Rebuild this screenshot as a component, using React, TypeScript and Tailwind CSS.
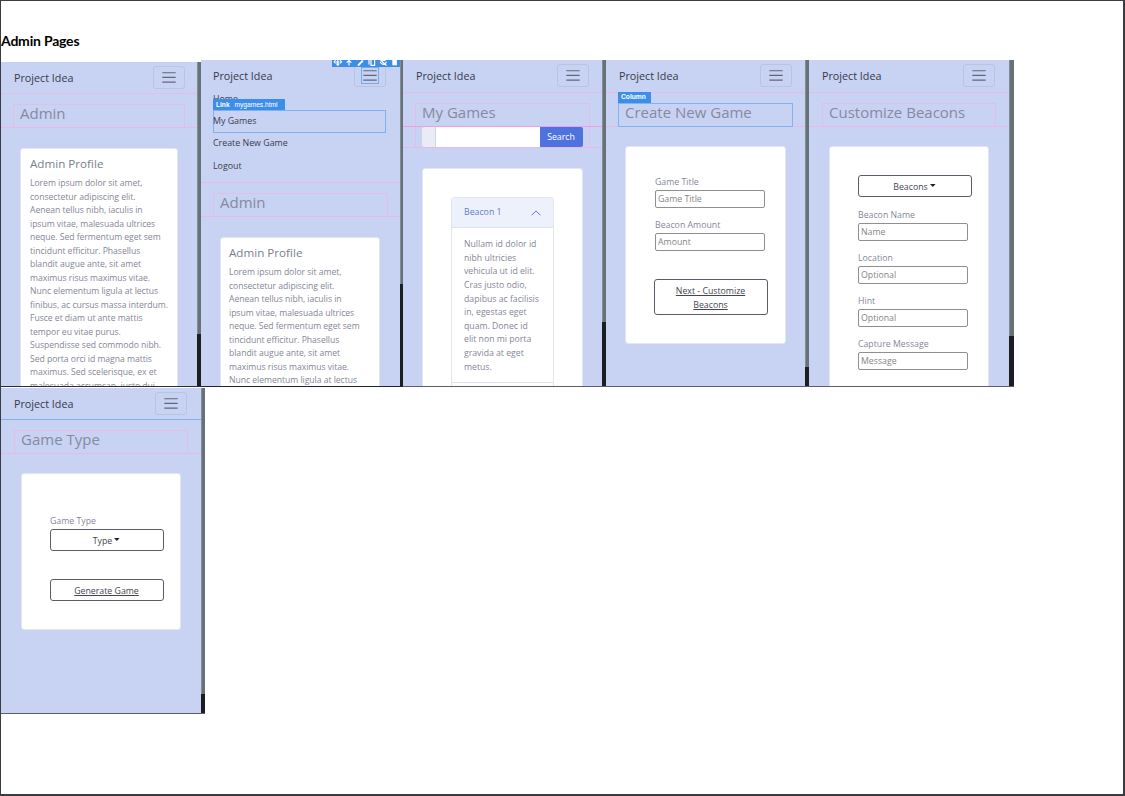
import type { ReactNode } from "react";

const LOREM = [
  "Lorem ipsum dolor sit amet,",
  "consectetur adipiscing elit.",
  "Aenean tellus nibh, iaculis in",
  "ipsum vitae, malesuada ultrices",
  "neque. Sed fermentum eget sem",
  "tincidunt efficitur. Phasellus",
  "blandit augue ante, sit amet",
  "maximus risus maximus vitae.",
  "Nunc elementum ligula at lectus",
  "finibus, ac cursus massa interdum.",
  "Fusce et diam ut ante mattis",
  "tempor eu vitae purus.",
  "Suspendisse sed commodo nibh.",
  "Sed porta orci id magna mattis",
  "maximus. Sed scelerisque, ex et",
  "malesuada accumsan, justo dui",
];

const BEACON_TEXT = [
  "Nullam id dolor id",
  "nibh ultricies",
  "vehicula ut id elit.",
  "Cras justo odio,",
  "dapibus ac facilisis",
  "in, egestas eget",
  "quam. Donec id",
  "elit non mi porta",
  "gravida at eget",
  "metus.",
];

function Phone({ width, thumb, bar, bottom = "border-[#5b5f6c]", children }: {
  width: string;
  thumb: string;
  bar: string;
  bottom?: string;
  children: ReactNode;
}) {
  return (
    <div className={`flex h-full border-b ${bottom}`}>
      <div className={`h-full shrink-0 overflow-hidden bg-[#c8d2f3] ${width}`}>{children}</div>
      <div className={`h-full shrink-0 bg-[#1c1f22] ${bar}`}>
        <div className={`border-l border-[#838c99] bg-[#677274] ${thumb}`} />
      </div>
    </div>
  );
}

function NavBar({ pad = "pl-[13px] pr-[13px]", active = false }: { pad?: string; active?: boolean }) {
  return (
    <div className={`flex h-[31px] items-start justify-between ${pad}`}>
      <span className="mt-[7px] text-[10.75px] leading-[18px] whitespace-nowrap text-[#363a48]">Project Idea</span>
      <span className="mt-1 flex h-[23px] w-8 items-center justify-center rounded-[3px] border border-[#bac3e2]">
        <span className={`flex h-[17px] w-[18px] items-center justify-center ${active ? "border border-[#74aaf0]" : ""}`}>
          <svg width="14" height="13" viewBox="0 0 14 13" fill="none" stroke="#626779" className="shrink-0">
            <path d="M.3 1.7h13.4M.3 6.4h13.4M.3 11.1h13.4" strokeWidth="1.1" />
          </svg>
        </span>
      </span>
    </div>
  );
}

function Title({ children, pad = "px-[13px]", blue = false }: { children: ReactNode; pad?: string; blue?: boolean }) {
  return (
    <div className={`flex h-[34px] flex-col border-b border-[#eab8e6] pt-[10px] ${pad}`}>
      <div
        className={`shrink-0 border pl-[6px] ${
          blue ? "h-6 border-[#82b2f0]" : "h-[23px] border-b-0 border-[#e2bdea]"
        }`}
      >
        <h2 className="-mt-[2px] text-[15px] leading-5 whitespace-nowrap text-[#868a9f]">{children}</h2>
      </div>
    </div>
  );
}

function Profile({ place, lines }: { place: string; lines: string[] }) {
  return (
    <div className={`h-[400px] rounded-t-[3px] border border-[#e1e6f5] bg-white pt-[5px] ${place}`}>
      <h3 className="text-[11.65px] leading-5 text-[#7b7e8e]">Admin Profile</h3>
      <div className="mt-[3px] text-[8.65px] leading-[13.53px] tracking-[-0.04px] whitespace-nowrap text-[#858796]">
        {lines.map((line) => (
          <p key={line}>{line}</p>
        ))}
      </div>
    </div>
  );
}

function Field({ label, value }: { label: string; value: string }) {
  return (
    <div className="mb-[11px] h-8 text-[8.75px] leading-[13px] text-[#858796]">
      <div className="whitespace-nowrap">{label}</div>
      <div className="mt-px flex h-[18px] w-[110px] items-center rounded-[2px] border border-[#8f8f8f] pl-[2px] text-[#858585]">
        {value}
      </div>
    </div>
  );
}

function Outline({ children, size = "h-[22px]", link = false }: { children: ReactNode; size?: string; link?: boolean }) {
  return (
    <div
      className={`flex w-[114px] items-center justify-center rounded-[3px] border border-[#5a5c69] pt-px pr-px text-center text-[8.75px] leading-[14px] text-[#43454f] ${size} ${
        link ? "underline" : ""
      }`}
    >
      <span>{children}</span>
      {!link && (
        <svg width="6" height="3" viewBox="0 0 6 3" fill="#222" className="mb-[2px] ml-[2px]">
          <path d="M0 0h5.6L2.8 3z" />
        </svg>
      )}
    </div>
  );
}

function Toolbar() {
  return (
    <div className="absolute top-0 right-[3px] h-[7px] w-[68px] overflow-hidden bg-[#3d8ee8]">
      <svg width="68" height="7" viewBox="0 0 68 7" fill="none" stroke="#fff" strokeWidth="1.2">
        <path d="M4 2h3.5M5.8 0v5M4.3 3.7l1.5 1.6 1.5-1.6M3.6.3 2.2 1.8l1.4 1.5M8.1.3l1.4 1.5-1.4 1.5" />
        <path d="M17 5.6V.7M14.6 2.6 17 .5l2.4 2.1" />
        <path d="m26 5.6 4.8-5" strokeWidth="2" />
        <path d="M37 0v4.5M39 0v5.4h3.6V0" />
        <path d="M48 1.8c1.6 3.4 5 3.4 6.6 0M48.5 0l6 5.5M49.5.5h4" />
        <path d="M60.3 0h4.6v5.3h-4.6z" fill="#fff" stroke="none" />
      </svg>
    </div>
  );
}

export default function App() {
  return (
    <div className="flex h-[796px] w-[1125px] flex-col overflow-hidden border-t border-r-2 border-b-2 border-l border-t-[#3a3c3f] border-r-[#3a3c40] border-b-[#3a3c40] border-l-[#3a3c3f] bg-white font-['Open_Sans',sans-serif]">
      <h1 className="flex h-[59px] shrink-0 items-end pb-[9px] font-['Lato',sans-serif] text-[14px] leading-5 font-bold tracking-[-0.2px] text-black">
        Admin Pages
      </h1>

      <div className="flex h-[327px] shrink-0">
        <div className="h-full pt-[2px]">
          <Phone width="w-[196px]" bar="w-1" thumb="h-[272px]" bottom="border-[#2a2c33]">
            <NavBar pad="pl-[13px] pr-3" />
            <div className="border-t border-[#e2bdea]" />
            <Title pad="px-3">Admin</Title>
            <Profile place="mt-5 ml-[19px] w-[158px] pl-[9px]" lines={LOREM} />
          </Phone>
        </div>

        <div className="relative h-full">
          <Phone width="w-[199px]" bar="w-[3px]" thumb="h-[224px]" bottom="border-[#1f2430]">
            <NavBar pad="pl-3 pr-[14px]" active />
            <div className="-mt-1 h-24 border-b border-[#eab8e6] pr-[14px] pl-3 text-[8.85px] text-[#3a3e4c]">
              <div className="flex h-[23px] items-center pt-[2px]">Home</div>
              <div className="relative flex h-[23px] items-center border border-[#7fb0f1] pt-px">
                <span className="-ml-px">My Games</span>
                <div className="absolute -top-3 -left-px flex h-[11px] w-[72px] items-center gap-[5px] bg-[#3d8ee8] pl-[3px] font-['Liberation_Sans',sans-serif] text-[6.6px] whitespace-nowrap text-white">
                  <b>Link</b>
                  <span>mygames.html</span>
                </div>
              </div>
              <div className="flex h-[22px] items-center">Create New Game</div>
              <div className="flex h-[23px] items-center">Logout</div>
            </div>
            <Title pad="px-3">Admin</Title>
            <Profile place="mt-5 ml-[19px] w-[160px] pl-[8px]" lines={LOREM.slice(0, 9)} />
          </Phone>
          <Toolbar />
        </div>

        <Phone width="w-[199px]" bar="w-1" thumb="h-[262px]">
          <NavBar />
          <div className="mt-px border-t border-[#e2bdea]" />
          <div className="flex h-[34px] flex-col border-b border-[#f59be0] px-3 pt-[10px]">
            <div className="h-[23px] border border-b-0 border-[#e2bdea] pl-[6px]">
              <h2 className="-mt-[2px] text-[15px] leading-5 text-[#868a9f]">My Games</h2>
            </div>
          </div>
          <div className="h-[21px] border-b border-[#eab8e6] px-3">
            <div className="flex h-5 border-x border-[#e2bdea] px-[6px] text-[8.75px]">
              <div className="w-[14px] rounded-l-[3px] border-r border-[#d5d8e2] bg-[#e9ecf4]" />
              <div className="flex-1 bg-white" />
              <div className="flex w-[43px] items-center justify-center rounded-r-[2px] bg-[#4e73df] pt-px pr-px text-white">
                Search
              </div>
            </div>
          </div>
          <div className="mt-5 ml-[19px] h-[230px] w-[161px] rounded-t-[3px] border border-[#e1e6f5] bg-white pt-7 pl-7">
            <div className="w-[103px] rounded-t-[3px] border border-[#e3e6ee] text-[8.75px]">
              <div className="flex h-[30px] items-center justify-between border-b border-[#dde2ef] bg-[#edf1fc] pr-3 pl-[12px] text-[#5f7bd0]">
                <span>Beacon 1</span>
                <svg width="10" height="6" viewBox="0 0 10 6" fill="none" stroke="#5f7bd0">
                  <path d="m.6 5.3 4.4-4.4 4.4 4.4" />
                </svg>
              </div>
              <div className="h-[154px] pt-[10px] pl-[12px] text-[8.7px] leading-[13.63px] whitespace-nowrap text-[#858796]">
                {BEACON_TEXT.map((line) => (
                  <p key={line}>{line}</p>
                ))}
              </div>
              <div className="h-5 border-t border-[#dfe2ea]" />
            </div>
          </div>
        </Phone>

        <div className="relative h-full">
          <Phone width="w-[199px]" bar="w-1" thumb="h-[307px]">
            <NavBar pad="pl-[13px] pr-[13px]" />
            <div className="mt-px border-t border-[#e2bdea]" />
            <Title pad="pl-3 pr-3" blue>
              Create New Game
            </Title>
            <div className="mt-[19px] ml-[19px] h-[198px] w-[161px] rounded-[3px] border border-[#e1e6f5] bg-white pt-[29px] pl-7">
              <div className="pl-px">
                <Field label="Game Title" value="Game Title" />
                <Field label="Beacon Amount" value="Amount" />
              </div>
              <div className="pt-[17px]">
                <Outline size="h-9" link>
                  Next - Customize
                  <br />
                  Beacons
                </Outline>
              </div>
            </div>
          </Phone>
          <div className="absolute top-8 left-3 flex h-[11px] w-[33px] items-center bg-[#3d8ee8] pl-[3px] font-['Liberation_Sans',sans-serif] text-[6.7px] font-bold text-white">
            Column
          </div>
        </div>

        <Phone width="w-[200px]" bar="w-[5px]" thumb="h-[276px]">
          <NavBar pad="pl-[13px] pr-[14px]" />
          <div className="mt-px border-t border-[#e2bdea]" />
          <Title>Customize Beacons</Title>
          <div className="mt-[19px] ml-5 h-[260px] w-[160px] rounded-t-[3px] border border-[#e1e6f5] bg-white pt-7 pl-7">
            <Outline>Beacons</Outline>
            <div className="mt-3">
              <Field label="Beacon Name" value="Name" />
              <Field label="Location" value="Optional" />
              <Field label="Hint" value="Optional" />
              <Field label="Capture Message" value="Message" />
            </div>
          </div>
        </Phone>
      </div>

      <div className="mt-px flex h-[326px] shrink-0">
        <Phone width="w-[200px]" bar="w-1" thumb="h-[306px]">
          <div className="border-b border-[#82b2f0]">
            <NavBar pad="pl-[13px] pr-[14px]" />
          </div>
          <Title>Game Type</Title>
          <div className="mt-[19px] ml-5 h-[157px] w-[160px] rounded-[3px] border border-[#e1e6f5] bg-white pt-[41px] pl-7">
            <div className="text-[8.75px] leading-[13px] text-[#858796]">Game Type</div>
            <div className="mt-px">
              <Outline>Type</Outline>
            </div>
            <div className="mt-7">
              <Outline link>Generate Game</Outline>
            </div>
          </div>
        </Phone>
      </div>
    </div>
  );
}
